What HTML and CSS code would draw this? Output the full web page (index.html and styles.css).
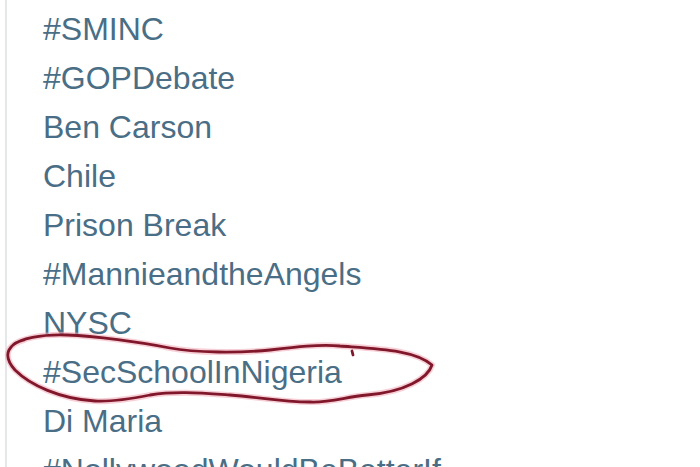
FILE: index.html
```html
<!DOCTYPE html>
<html>
<head>
<meta charset="utf-8">
<link rel="stylesheet" href="styles.css">
</head>
<body>
<div class="page">
  <ul class="trends">
    <li><a class="trend">#SMINC</a></li>
    <li><a class="trend">#GOPDebate</a></li>
    <li><a class="trend">Ben Carson</a></li>
    <li><a class="trend">Chile</a></li>
    <li><a class="trend">Prison Break</a></li>
    <li><a class="trend">#MannieandtheAngels</a></li>
    <li><a class="trend">NYSC</a></li>
    <li><a class="trend">#SecSchoolInNigeria</a></li>
    <li><a class="trend">Di Maria</a></li>
    <li><a class="trend">#NollywoodWouldBeBetterIf</a></li>
  </ul>
  <svg class="scribble" width="700" height="467" viewBox="0 0 700 467" xmlns="http://www.w3.org/2000/svg">
    <path class="halo" d="M 13 345 C 20 339, 40 334, 67 335 C 95 336, 140 342, 170 348 C 195 353, 240 353, 270 350 C 295 347, 320 344, 340 346 C 380 349, 415 350, 432 365 C 428 378, 405 392, 367 395 C 345 397, 330 403, 310 402 C 280 402, 260 397, 230 395 C 200 393, 175 391, 150 395 C 130 399, 110 402, 95 401 C 60 399, 30 385, 15 370 C 8 362, 6 356, 9 350 C 11 346, 16 342, 24 340"/>
    <path class="ink" d="M 13 345 C 20 339, 40 334, 67 335 C 95 336, 140 342, 170 348 C 195 353, 240 353, 270 350 C 295 347, 320 344, 340 346 C 380 349, 415 350, 432 365 C 428 378, 405 392, 367 395 C 345 397, 330 403, 310 402 C 280 402, 260 397, 230 395 C 200 393, 175 391, 150 395 C 130 399, 110 402, 95 401 C 60 399, 30 385, 15 370 C 8 362, 6 356, 9 350 C 11 346, 16 342, 24 340"/>
    <path class="ink" d="M 352 351 L 353 355"/>
  </svg>
</div>
</body>
</html>
```

FILE: styles.css
```css
html, body {
  margin: 0;
  padding: 0;
  background: #ffffff;
  width: 700px;
  height: 467px;
  overflow: hidden;
}

.page {
  position: relative;
  width: 700px;
  height: 467px;
  overflow: hidden;
}

.trends {
  list-style: none;
  margin: 0 0 0 5px;
  padding: 5px 0 0 36px;
  border-left: 2px solid #e4e8eb;
  height: 100%;
  box-sizing: border-box;
}

.trends li {
  font-family: "Liberation Sans", Arial, sans-serif;
  font-size: 32px;
  line-height: 49px;
  white-space: nowrap;
}

.trend {
  color: #4a6e85;
  text-decoration: none;
}

.scribble {
  position: absolute;
  left: 0;
  top: 0;
  pointer-events: none;
}

.scribble .ink {
  fill: none;
  stroke: #80172a;
  stroke-width: 2.8;
  stroke-linecap: round;
  stroke-linejoin: round;
}

.scribble .halo {
  fill: none;
  stroke: #f0a8b6;
  stroke-width: 6;
  stroke-linecap: round;
  stroke-linejoin: round;
  opacity: 0.55;
}
```
